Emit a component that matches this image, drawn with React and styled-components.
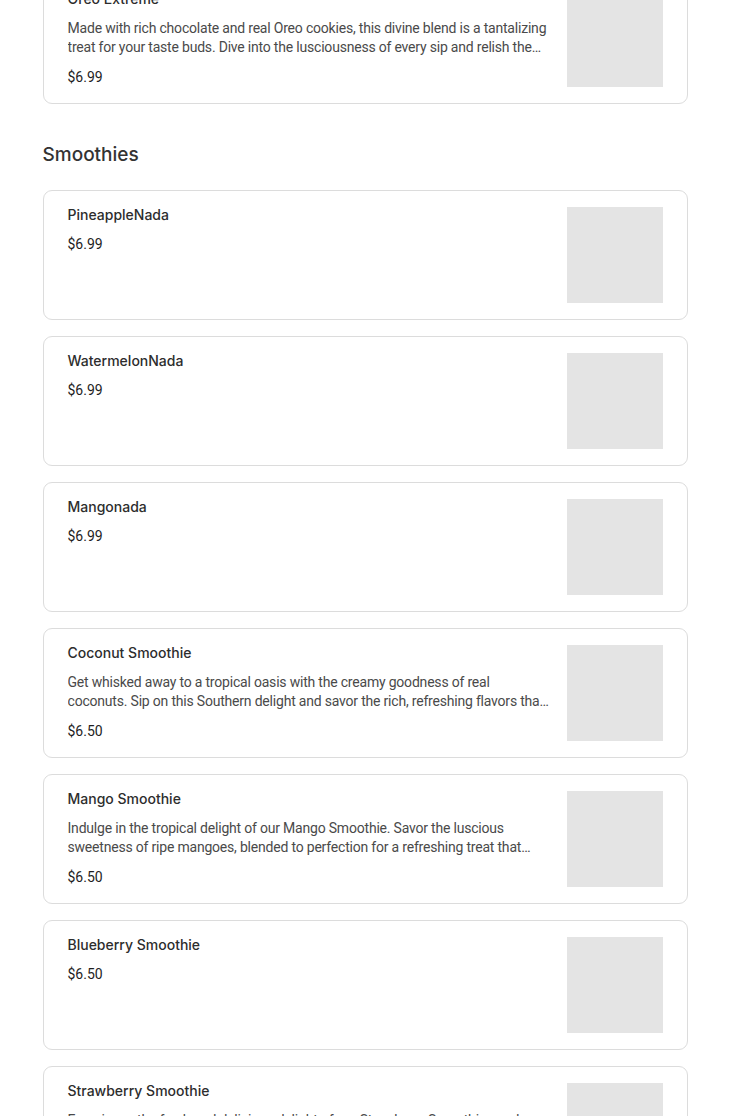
import { createGlobalStyle, styled } from "styled-components"

const GlobalStyle = createGlobalStyle`
  html, body {
    margin: 0;
    padding: 0;
    background-color: #fff;
  }
  body {
    font-family: "Roboto", "Liberation Sans", sans-serif;
    overflow: hidden;
  }
  * {
    box-sizing: border-box;
  }
`

const milkshakes = [
  {
    id: 0,
    name: "Oreo Extreme",
    description:
      "Made with rich chocolate and real Oreo cookies, this divine blend is a tantalizing treat for your taste buds. Dive into the lusciousness of every sip and relish the velvety cookies and cream goodness.",
    price: "$6.99",
  },
]

const smoothies = [
  { id: 1, name: "PineappleNada", price: "$6.99" },
  { id: 2, name: "WatermelonNada", price: "$6.99" },
  { id: 3, name: "Mangonada", price: "$6.99" },
  {
    id: 4,
    name: "Coconut Smoothie",
    description:
      "Get whisked away to a tropical oasis with the creamy goodness of real coconuts. Sip on this Southern delight and savor the rich, refreshing flavors that transport you to the islands.",
    price: "$6.50",
  },
  {
    id: 5,
    name: "Mango Smoothie",
    description:
      "Indulge in the tropical delight of our Mango Smoothie. Savor the luscious sweetness of ripe mangoes, blended to perfection for a refreshing treat that brightens your day.",
    price: "$6.50",
  },
  { id: 6, name: "Blueberry Smoothie", price: "$6.50" },
  {
    id: 7,
    name: "Strawberry Smoothie",
    description:
      "Experience the fresh and delicious delight of our Strawberry Smoothie, made with ripe, juicy strawberries blended into a cool and creamy treat.",
    price: "$6.50",
  },
]

const MenuCard = ({ item }) => (
  <Card>
    <Info>
      <ItemName>{item.name}</ItemName>
      {item.description && <Description>{item.description}</Description>}
      <Price>{item.price}</Price>
    </Info>
    <Thumb />
  </Card>
)

export default function App() {
  return (
    <>
      <GlobalStyle />
      <Page>
        <Section>
          <CardList>
            {milkshakes.map((item) => (
              <MenuCard key={item.id} item={item} />
            ))}
          </CardList>
        </Section>
        <Section>
          <SectionTitle>Smoothies</SectionTitle>
          <CardList>
            {smoothies.map((item) => (
              <MenuCard key={item.id} item={item} />
            ))}
          </CardList>
        </Section>
      </Page>
    </>
  )
}

const Page = styled.main`
  width: 645px;
  margin: -26px auto 0;
  display: flex;
  flex-direction: column;
  gap: 39px;
`

const Section = styled.section`
  display: flex;
  flex-direction: column;
`

const SectionTitle = styled.h2`
  margin: 0 0 23px;
  font-family: "Inter", "Liberation Sans", sans-serif;
  font-size: 19px;
  font-weight: 500;
  line-height: 24px;
  color: #333;
`

const CardList = styled.div`
  display: flex;
  flex-direction: column;
  gap: 16px;
`

const Card = styled.article`
  display: grid;
  grid-template-columns: 1fr 96px;
  column-gap: 16px;
  align-items: start;

  height: 130px;
  padding: 15px 24px;

  border: 1px solid #dcdcdc;
  border-radius: 9px;
  background-color: #fff;
`

const Info = styled.div`
  display: flex;
  flex-direction: column;
  gap: 12px;
  min-width: 0;
`

const ItemName = styled.h3`
  margin: 0;
  font-family: "Inter", "Liberation Sans", sans-serif;
  font-size: 14px;
  font-weight: 500;
  line-height: 17px;
  color: #2d2d2d;
`

const Description = styled.p`
  margin: 0;
  font-size: 14px;
  line-height: 18.5px;
  letter-spacing: -0.2px;
  color: #4a4a4a;

  display: -webkit-box;
  -webkit-line-clamp: 2;
  -webkit-box-orient: vertical;
  overflow: hidden;
`

const Price = styled.span`
  font-size: 14px;
  line-height: 18px;
  color: #1e1e1e;
`

const Thumb = styled.div`
  width: 96px;
  height: 96px;
  margin-top: 1px;
  background-color: #e4e4e4;
`
